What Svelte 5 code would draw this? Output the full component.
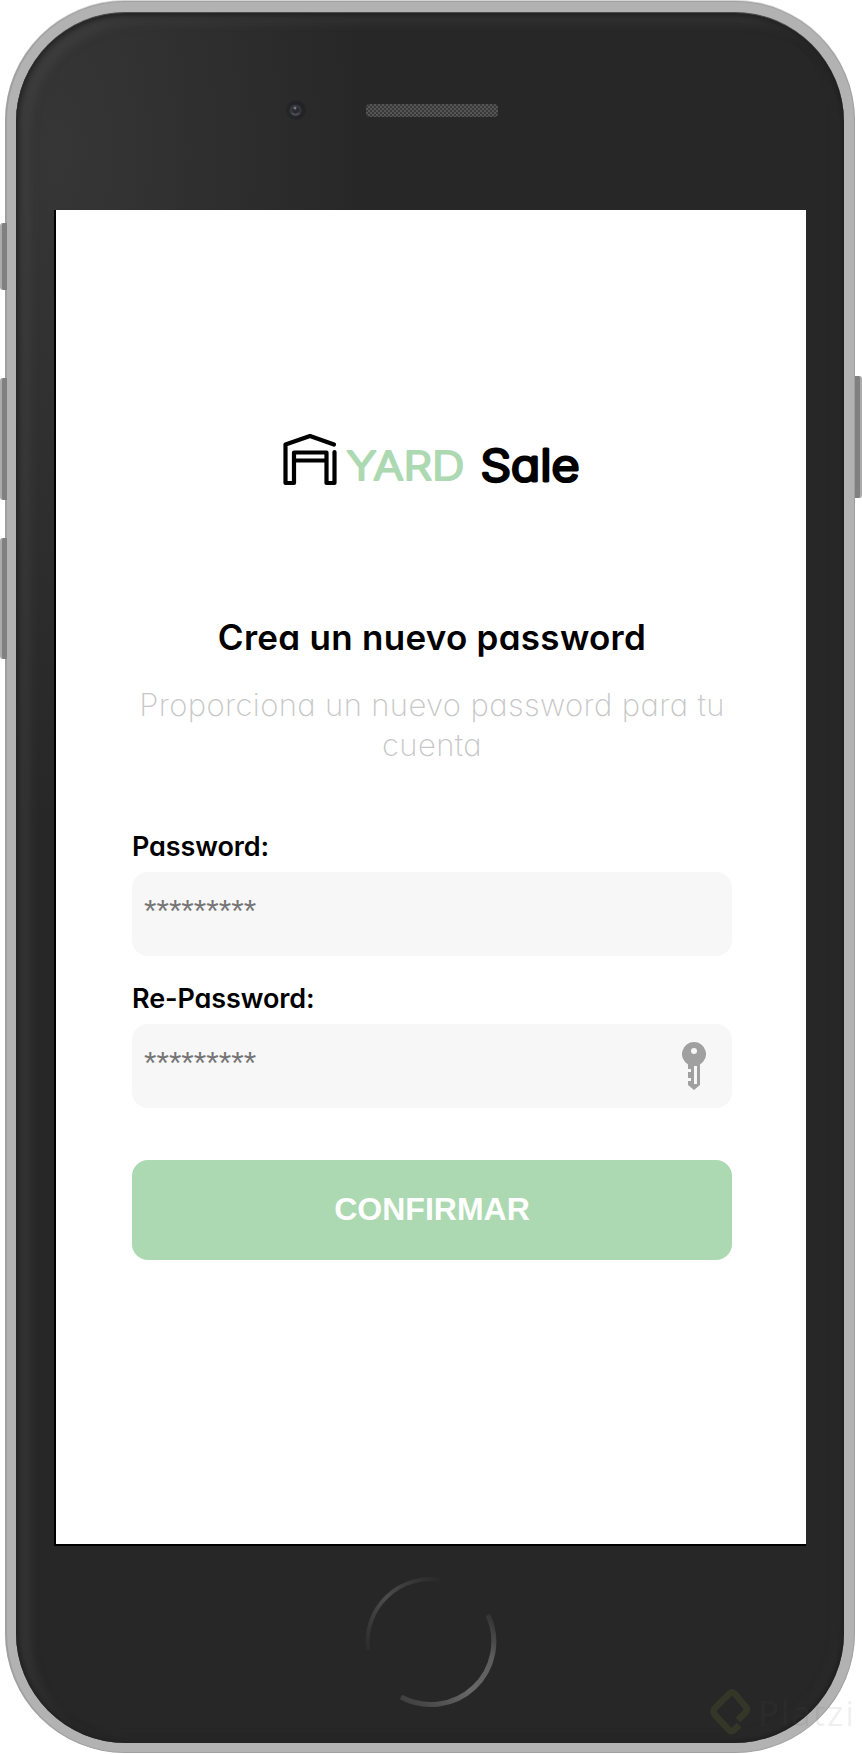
<script>
  const fields = [
    { id: 'password', label: 'Password:', key: false },
    { id: 're-password', label: 'Re-Password:', key: true }
  ];
</script>

<div class="stage">
  <i class="side l" style="top: 223px; height: 67px"></i>
  <i class="side l" style="top: 378px; height: 122px"></i>
  <i class="side l" style="top: 538px; height: 121px"></i>
  <i class="side r" style="top: 376px; height: 122px"></i>

  <div class="phone">
    <div class="glass">
      <header>
        <svg class="camera" width="24" height="24" viewBox="0 0 24 24">
          <circle cx="12" cy="11" r="10" fill="#252528" />
          <circle cx="13" cy="11" r="8" fill="#222227" />
          <circle cx="11.500" cy="11.500" r="6" fill="#36363d" />
          <circle cx="12" cy="11.500" r="3.500" fill="#292930" />
          <circle cx="11" cy="9" r="1.500" fill="#77777d" />
          <path d="M8 14a5 5 0 0 0 7 0" fill="none" stroke="#4c4c54" stroke-width="2" />
        </svg>
        <svg class="speaker" width="132" height="14" viewBox="0 0 132 14">
          <defs>
            <pattern id="mesh" width="4" height="4" patternUnits="userSpaceOnUse">
              <rect width="4" height="4" fill="#393939" />
              <path d="M0 0h2v2H0zM2 2h2v2H2z" fill="#555" />
            </pattern>
          </defs>
          <rect width="132" height="13" rx="4" fill="url(#mesh)" />
        </svg>
      </header>

      <main>
        <svg class="logo" width="300" height="60" viewBox="281 430 300 60" role="img" aria-label="YARD Sale">
          <path
            d="M333 444.500 309 436 284.500 444.500V483h8.500V452.500H325.500V483h8V452M293 460.500h32"
            fill="none" stroke="#000" stroke-width="4.200" stroke-linecap="round" stroke-linejoin="round" />
          <text class="yard" x="345.500" y="480" textLength="118" lengthAdjust="spacingAndGlyphs">YARD</text>
          <text class="sale" x="479.500" y="480.500" textLength="99" lengthAdjust="spacingAndGlyphs">Sale</text>
        </svg>

        <h1>Crea un nuevo password</h1>
        <p>Proporciona un nuevo password para tu cuenta</p>

        <form>
          {#each fields as f}
            <label for={f.id}>{f.label}</label>
            <div class="field">
              <input id={f.id} type="password" placeholder="*********" />
              {#if f.key}
                <svg width="24" height="48" viewBox="0 0 24 48">
                  <path
                    fill="#a0a0a0" fill-rule="evenodd"
                    d="M12 0a12 12 0 0 1 6 22.400V43l-6 5-6-5v-4h3v-3H6v-6h3v-3H6v-4.600A12 12 0 0 1 12 0zM12 6a3 3 0 1 0 0 6 3 3 0 0 0 0-6zM12 24v18h3V24z" />
                </svg>
              {/if}
            </div>
          {/each}
          <button type="button">CONFIRMAR</button>
        </form>
      </main>

      <footer>
        <svg width="136" height="136" viewBox="0 0 136 136">
          <defs>
            <linearGradient id="arcA" x1="0" y1="1" x2="1" y2="0">
              <stop offset="0" stop-color="#2c2c2c" />
              <stop offset=".5" stop-color="#4c4c4c" />
              <stop offset="1" stop-color="#282828" />
            </linearGradient>
            <linearGradient id="arcB" x1="0" y1="1" x2="1" y2="0">
              <stop offset="0" stop-color="#3c3c3c" />
              <stop offset=".45" stop-color="#686868" />
              <stop offset=".75" stop-color="#5c5c5c" />
              <stop offset="1" stop-color="#303030" />
            </linearGradient>
          </defs>
          <path d="M5 76A63 63 0 0 1 78 6" fill="none" stroke="url(#arcA)" stroke-width="4" />
          <path d="M125 41A63 63 0 0 1 38 123" fill="none" stroke="url(#arcB)" stroke-width="5" />
        </svg>
      </footer>
    </div>
  </div>

  <div class="mark">
    <svg width="42" height="50" viewBox="0 0 42 50">
      <path d="M28 33 35 26Q38 23 36 20L25 7Q22 4 19 7L5 21Q2 24 5 28L19 43Q22 46 25 42L29 38" fill="none" stroke="#3a3d29" stroke-opacity=".75" stroke-width="6.500" stroke-linejoin="round" />
    </svg>
    <span>Platzi</span>
  </div>
</div>

<style>
  :global(body) {
    background: #fff;
  }

  .stage {
    position: relative;
    box-sizing: border-box;
    width: 862px;
    height: 1754px;
    padding: 1px 7px 1px 5px;
    overflow: hidden;
    font-family: Inter, sans-serif;
    font-feature-settings: 'cv11';
  }

  .phone {
    box-sizing: border-box;
    height: 1752px;
    padding: 10px 10px 9px 9px;
    border: 1px solid #a0a0a0;
    border-width: 1px 1px 1px 2px;
    border-radius: 120px;
    background: #b2b2b2;
    box-shadow: 0 -1px 0 #d4d4d4;
  }

  .glass {
    display: flex;
    flex-direction: column;
    box-sizing: border-box;
    height: 1731px;
    padding-left: 38px;
    border-top: 1px solid #4c4c4c;
    border-radius: 110px;
    background:
      radial-gradient(ellipse 310px 680px at 5% 8%, #363636 0%, rgba(54, 54, 54, 0) 100%),
      #272727;
    box-shadow:
      inset 0 0 7px 2px #1c1c1c,
      inset 12px 8px 10px 2px rgba(78, 78, 78, 0.36),
      inset -8px -6px 10px rgba(64, 64, 64, 0.2);
  }

  header {
    display: flex;
    align-items: center;
    box-sizing: border-box;
    height: 197px;
    padding: 0 0 2px 230px;
  }

  .camera {
    flex: none;
  }

  .speaker {
    margin-left: 58px;
  }

  main {
    display: flex;
    flex-direction: column;
    box-sizing: border-box;
    width: 752px;
    height: 1336px;
    padding: 220px 74px 0 76px;
    border: solid #000;
    border-width: 0 0 2px 2px;
    background: #fff;
  }

  .logo {
    align-self: center;
    flex: none;
  }

  .logo text {
    stroke-linejoin: round;
    font-weight: 300;
  }

  .yard {
    fill: #acd9b2;
    stroke: #acd9b2;
    stroke-width: 2.200px;
    font-size: 39px;
  }

  .sale {
    fill: #000;
    stroke: #000;
    stroke-width: 3px;
    font-size: 43px;
  }

  h1 {
    margin: 124px 0 0;
    font-size: 35px;
    font-weight: 600;
    letter-spacing: 0.28px;
    line-height: 46px;
    text-align: center;
    white-space: nowrap;
  }

  p {
    margin: 25px -4px 0;
    color: #c7c7c7;
    font-size: 31px;
    font-weight: 200;
    letter-spacing: 0.38px;
    line-height: 40px;
    text-align: center;
  }

  form {
    display: flex;
    flex-direction: column;
    margin-top: 64px;
  }

  label {
    margin-bottom: 7px;
    font-size: 27px;
    font-weight: 600;
    letter-spacing: -0.1px;
    line-height: 36px;
    white-space: nowrap;
  }

  .field {
    display: flex;
    align-items: center;
    box-sizing: border-box;
    height: 84px;
    margin-bottom: 25px;
    padding: 0 26px 0 12px;
    border-radius: 16px;
    background: #f7f7f7;
  }

  input {
    flex: 1;
    min-width: 0;
    padding: 0 0 6px;
    border: 0;
    outline: 0;
    background: transparent;
    font: 32px 'Liberation Sans', sans-serif;
  }

  input::placeholder {
    color: #757575;
  }

  button {
    height: 100px;
    margin-top: 27px;
    padding: 0 0 2px;
    border: 0;
    border-radius: 16px;
    background: #acd9b2;
    color: #fff;
    font: bold 32px 'Liberation Sans', sans-serif;
  }

  footer {
    padding: 28px 0 0 309px;
  }

  .side {
    position: absolute;
    box-sizing: border-box;
    width: 7px;
    background: #808080;
  }

  .side.l {
    left: 0;
    border-left: 2px solid #ababab;
    border-radius: 3px 0 0 3px;
  }

  .side.r {
    right: 0;
    border-right: 2px solid #ababab;
    border-radius: 0 3px 3px 0;
  }

  .mark {
    position: absolute;
    left: 710px;
    top: 1687px;
    display: flex;
    align-items: center;
    gap: 6px;
    color: rgba(90, 90, 90, 0.1);
    font: 35px 'Open Sans', sans-serif;
    letter-spacing: 1.800px;
  }
</style>
